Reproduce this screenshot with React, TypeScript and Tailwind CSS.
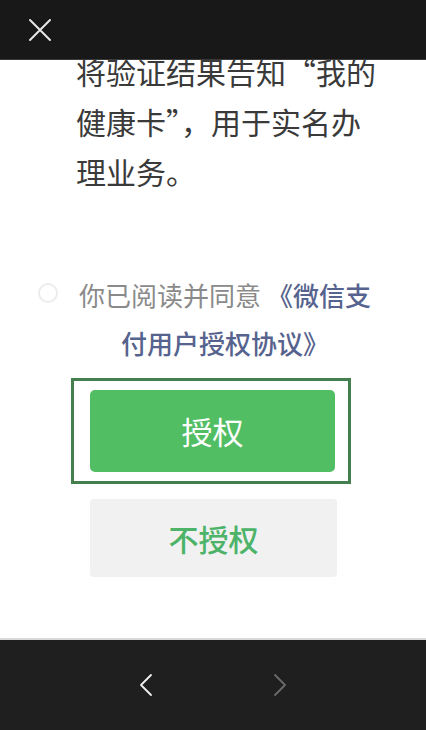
import React from 'react'

const cjk = { fontFamily: '"Noto Sans CJK SC", "Noto Sans", sans-serif' }

function CloseIcon() {
  return (
    <svg className="w-[24px] h-[24px]" viewBox="0 0 24 24" fill="none" stroke="#e8e8e8" strokeWidth="2" strokeLinecap="round">
      <path d="M2 2l20 20M22 2L2 22" />
    </svg>
  )
}

function Chevron({ dir, color }: { dir: 'left' | 'right'; color: string }) {
  return (
    <svg className="w-[14px] h-[24px]" viewBox="0 0 14 24" fill="none" stroke={color} strokeWidth="1.8" strokeLinecap="round" strokeLinejoin="round">
      <path d={dir === 'left' ? 'M12 2L2 12l10 10' : 'M2 2l10 10L2 22'} />
    </svg>
  )
}

export default function App() {
  return (
    <div className="w-[426px] h-[730px] flex flex-col bg-white overflow-hidden" style={cjk}>
      <div className="h-[60px] shrink-0 bg-[#181818] flex items-center pl-[28px] border-b border-[#3a3a3a]">
        <CloseIcon />
      </div>

      <div className="flex-1 overflow-hidden flex flex-col">
        <div className="-mt-[14px] pl-[76px] pr-[30px] text-[30px] leading-[50px] text-[#3a3a3a]">
          <p>将验证结果告知“我的</p>
          <p>健康卡”，用于实名办</p>
          <p>理业务。</p>
        </div>

        <div className="mt-[75px] flex items-start pl-[38px]">
          <div className="mt-[12px] w-[20px] h-[20px] rounded-full border-[2px] border-[#ececec] shrink-0" />
          <div className="ml-[20px] w-[294px] text-center text-[26px] leading-[48px] text-[#8a8a8a]">
            <p className="whitespace-nowrap">
              你已阅读并同意 <span className="text-[#56638e] font-medium">《微信支</span>
            </p>
            <p className="text-[#56638e] font-medium">付用户授权协议》</p>
          </div>
        </div>

        <div className="mt-[11px] self-start ml-[71px] w-[280px] h-[106px] border-[3px] border-[#437f4f] flex items-start pl-[16px] pt-[9px]">
          <button className="w-[245px] h-[82px] rounded-[5px] bg-[#52be64] text-white text-[31px]">
            授权
          </button>
        </div>

        <button className="mt-[15px] ml-[90px] w-[247px] h-[78px] rounded-[4px] bg-[#f1f1f1] text-[#4cb368] text-[30px] font-medium">
          不授权
        </button>
      </div>

      <div className="h-[92px] shrink-0 bg-[#1f1f1f] border-t-[2px] border-[#d8d8d8] flex items-center">
        <div className="ml-[139px]">
          <Chevron dir="left" color="#f0f0f0" />
        </div>
        <div className="ml-[120px]">
          <Chevron dir="right" color="#6a6a6a" />
        </div>
      </div>
    </div>
  )
}
